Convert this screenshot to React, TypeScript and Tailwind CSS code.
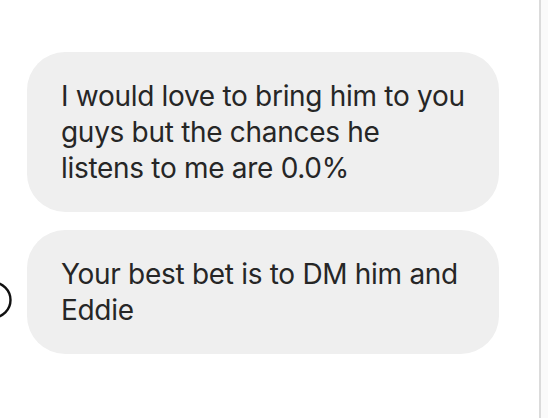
import React from 'react';

const messages = [
  'I would love to bring him to you guys but the chances he listens to me are 0.0%',
  'Your best bet is to DM him and Eddie',
];

const Bubble: React.FC<{ text: string }> = ({ text }) => (
  <div className="w-[472px] rounded-[38px] bg-[#efefef] px-[34px] py-[26px] text-[28px] leading-[36px] tracking-[-0.3px] text-[#262626]">
    {text}
  </div>
);

export default function App() {
  return (
    <div
      className="flex h-[418px] w-[548px] overflow-hidden bg-white"
      style={{ fontFamily: 'Inter, "Noto Sans", sans-serif' }}
    >
      <div className="flex flex-1 flex-col gap-[18px] pt-[52px]">
        <div className="flex">
          <div className="w-[27px]" />
          <Bubble text={messages[0]} />
        </div>
        <div className="flex">
          <div className="flex w-[27px] items-center pt-[16px]">
            <svg width="14" height="44" viewBox="0 0 14 44" className="shrink-0">
              <circle cx="-7" cy="22" r="17.5" fill="none" stroke="#111" strokeWidth="2.4" />
            </svg>
          </div>
          <Bubble text={messages[1]} />
        </div>
      </div>
      <div className="w-[9px] border-l-2 border-[#dbdbdb] bg-[#fafafa]" />
    </div>
  );
}
